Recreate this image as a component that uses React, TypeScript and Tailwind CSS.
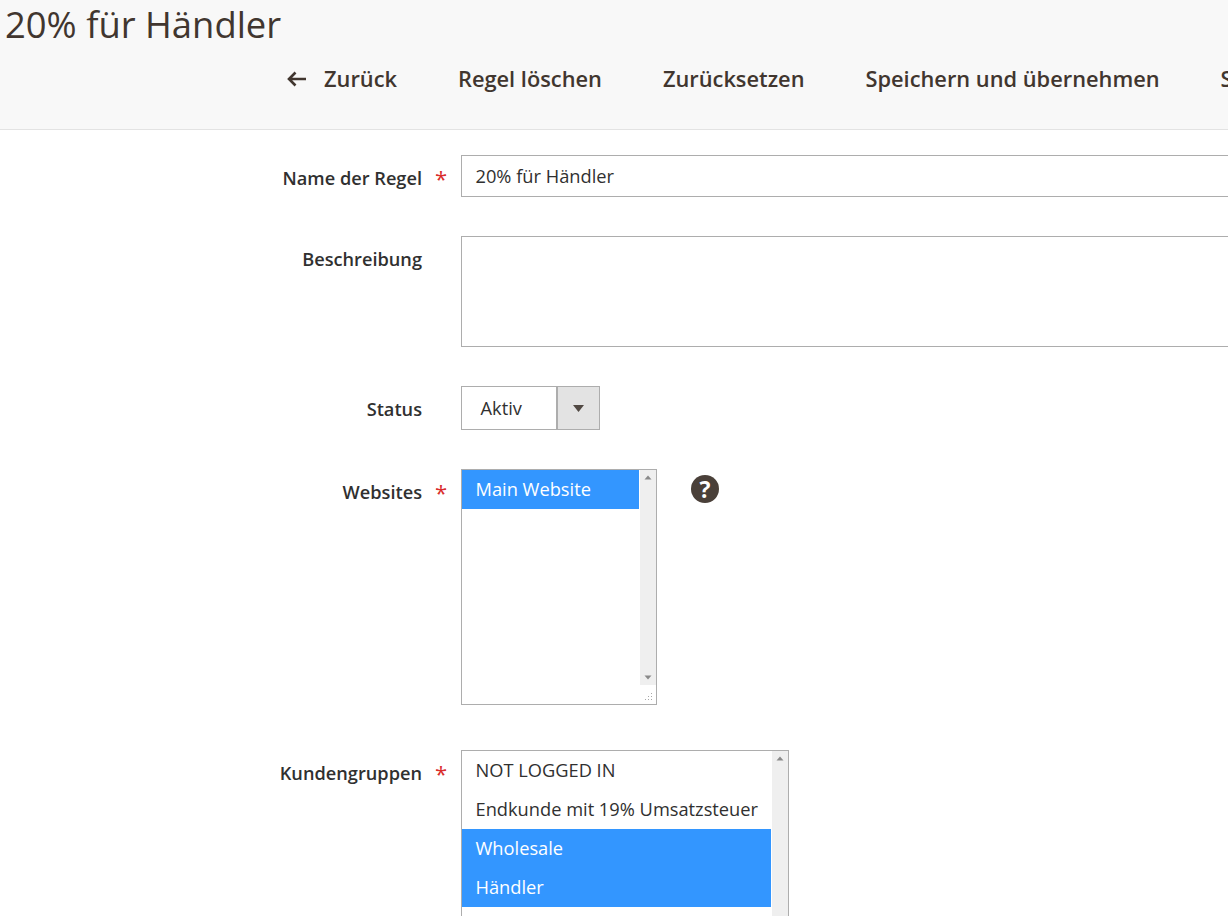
import { ReactNode } from "react";

function Field({
  label,
  required,
  labelClass,
  className,
  children,
}: {
  label: string;
  required?: boolean;
  labelClass: string;
  className: string;
  children: ReactNode;
}) {
  return (
    <div className={`flex items-start ${className}`}>
      <div className={`w-[422px] shrink-0 text-right text-[18.2px] leading-[24px] font-semibold text-[#303030] ${labelClass}`}>
        {label}
      </div>
      <div className={`w-[39px] shrink-0 pl-[13px] text-[22px] leading-[24px] text-[#d92c2c] ${labelClass}`}>
        {required ? "*" : ""}
      </div>
      {children}
    </div>
  );
}

function Arrow({ up }: { up?: boolean }) {
  return (
    <svg width="8" height="5" viewBox="0 0 8 5" className="shrink-0 fill-[#8a8a8a]">
      <path d={up ? "M4 0.5L7.5 4.5H0.5Z" : "M4 4.5L0.5 0.5H7.5Z"} />
    </svg>
  );
}

function Option({ text, selected }: { text: string; selected?: boolean }) {
  return (
    <div
      className={`h-[39px] pl-[13.5px] text-[18.25px] leading-[37px] whitespace-nowrap ${
        selected ? "bg-[#3396ff] text-white" : "text-[#303030]"
      }`}
    >
      {text}
    </div>
  );
}

export default function App() {
  return (
    <div className="h-[916px] w-[1228px] overflow-hidden bg-white font-['Open_Sans',sans-serif]">
      {/* Page header */}
      <div className="h-[130px] border-b border-[#e3e3e3] bg-[#f8f8f8] overflow-hidden">
        <h1 className="pt-[1px] pl-[5px] text-[36.4px] leading-[46px] font-normal text-[#41362f] whitespace-nowrap">
          20% für Händler
        </h1>
        <div className="mt-[16px] flex items-center pl-[287px] text-[21.8px] leading-[32px] font-semibold text-[#41362f] whitespace-nowrap">
          <svg width="19" height="16" viewBox="0 0 19 16" className="mr-[18px] shrink-0 fill-none stroke-[#41362f] stroke-[2.6]">
            <path d="M19 8H2M8.5 1.5L2 8L8.5 14.5" />
          </svg>
          <span className="mr-[61px] shrink-0">Zurück</span>
          <span className="mr-[61px] shrink-0">Regel löschen</span>
          <span className="mr-[61px] shrink-0">Zurücksetzen</span>
          <span className="mr-[61px] shrink-0">Speichern und übernehmen</span>
          <span className="shrink-0">Speichern</span>
        </div>
      </div>

      {/* Form */}
      <div className="pt-[25px]">
        <Field label="Name der Regel" required labelClass="pt-[11px]" className="mb-[39px]">
          <div className="h-[42px] w-[800px] shrink-0 border border-[#adadad] pl-[13.5px] text-[18.25px] leading-[40px] text-[#303030]">
            20% für Händler
          </div>
        </Field>

        <Field label="Beschreibung" labelClass="pt-[11px]" className="mb-[39px]">
          <div className="h-[111px] w-[800px] shrink-0 border border-[#adadad]" />
        </Field>

        <Field label="Status" labelClass="pt-[11px]" className="mb-[39px]">
          <div className="flex h-[44px] w-[139px] border border-[#adadad]">
            <div className="w-[94px] pl-[18.5px] text-[18.25px] leading-[42px] text-[#303030]">Aktiv</div>
            <div className="flex grow items-center justify-center border-l-2 border-[#adadad] bg-[#e3e3e3]">
              <svg width="11" height="7" viewBox="0 0 11 7" className="fill-[#514943]">
                <path d="M0 0H11L5.5 7Z" />
              </svg>
            </div>
          </div>
        </Field>

        <Field label="Websites" required labelClass="pt-[11px]" className="mb-[45px]">
          <div className="relative flex h-[236px] w-[196px] border border-[#adadad]">
            <div className="w-[177px]">
              <Option text="Main Website" selected />
            </div>
            <div className="ml-px flex h-[215px] w-[16px] flex-col items-center justify-between bg-[#efefef] py-[5px]">
              <Arrow up />
              <Arrow />
            </div>
            <svg width="12" height="12" viewBox="0 0 12 12" className="absolute right-[2px] bottom-[1px] fill-[#a8a8a8]">
              <path d="M9 2h1v1H9zM6 5h1v1H6zM9 5h1v1H9zM3 8h1v1H3zM6 8h1v1H6zM9 8h1v1H9z" />
            </svg>
          </div>
          <div className="ml-[34px] mt-[6px] flex h-[28px] w-[28px] items-center justify-center rounded-full bg-[#4a4039] text-[23px] leading-none font-bold text-white">
            ?
          </div>
        </Field>

        <Field label="Kundengruppen" required labelClass="pt-[11px]" className="">
          <div className="flex h-[240px] w-[328px] border border-[#adadad]">
            <div className="w-[309px]">
              <Option text="NOT LOGGED IN" />
              <Option text="Endkunde mit 19% Umsatzsteuer" />
              <Option text="Wholesale" selected />
              <Option text="Händler" selected />
            </div>
            <div className="ml-px flex w-[16px] flex-col items-center bg-[#efefef] py-[5px]">
              <Arrow up />
            </div>
          </div>
        </Field>
      </div>
    </div>
  );
}
